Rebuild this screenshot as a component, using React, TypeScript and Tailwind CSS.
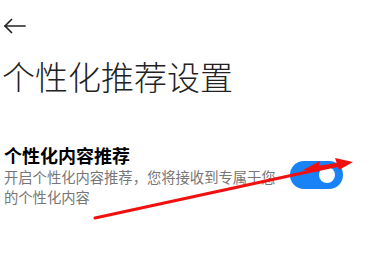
const FONT = '"Noto Sans CJK SC", "Noto Sans", sans-serif';

function Toggle({ on }: { on: boolean }) {
  return (
    <div
      className={
        on
          ? 'w-[53px] h-[28px] rounded-full bg-[#1a82f7] flex items-center justify-end px-[4px] flex-shrink-0'
          : 'w-[53px] h-[28px] rounded-full bg-gray-300 flex items-center px-[4px] flex-shrink-0'
      }
    >
      <div className="w-[16px] h-[16px] mr-[4px] rounded-full bg-white" />
    </div>
  );
}

// red annotation arrows drawn over the screenshot
function Annotation() {
  return (
    <svg className="absolute inset-0 pointer-events-none" width="391" height="255" viewBox="0 0 391 255">
      <line x1="95" y1="218" x2="344" y2="164" stroke="#f01010" strokeWidth="3" strokeLinecap="round" />
      <polygon points="353,162 335,158 339,170" fill="#f01010" />
      <line x1="312" y1="168" x2="345" y2="163" stroke="#f01010" strokeWidth="2.5" />
      <polygon points="303,170 320,161 318,172" fill="#f01010" />
    </svg>
  );
}

export default function App() {
  return (
    <div className="relative w-[391px] h-[255px] bg-white overflow-hidden" style={{ fontFamily: FONT }}>
      <div className="flex flex-col">
        <div className="h-[52px] pt-[18px] pl-[3px]">
          <svg width="24" height="16" viewBox="0 0 24 16" fill="none" stroke="#222" strokeWidth="1.7" strokeLinecap="round" strokeLinejoin="round">
            <path d="M2 8 H22" />
            <path d="M8.5 1.5 L2 8 L8.5 14.5" />
          </svg>
        </div>
        <h1 className="pl-[2px] text-[33px] leading-[48px] font-light text-[#222]">个性化推荐设置</h1>

        <div className="flex items-center mt-[43px] pl-[4px] pr-[48px]">
          <div className="flex-1 min-w-0">
            <div className="text-[18px] leading-[24px] font-bold text-black">个性化内容推荐</div>
            <p className="text-[14.3px] leading-[20px] text-[#777] w-[280px]">
              开启个性化内容推荐，您将接收到专属于您的个性化内容
            </p>
          </div>
          <div className="-mt-[1px]">
            <Toggle on />
          </div>
        </div>
      </div>
      <Annotation />
    </div>
  );
}
